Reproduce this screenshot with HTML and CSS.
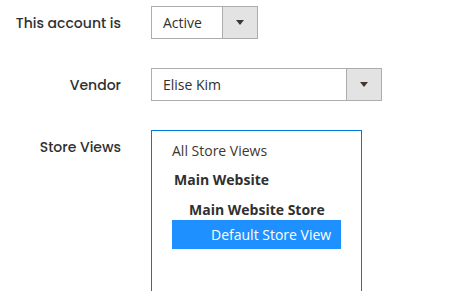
FILE: index.html
```html
<!DOCTYPE html>
<html lang="en">
<head>
    <meta charset="UTF-8">
    <title>Customer Account</title>
    <link rel="stylesheet" href="styles.css">
</head>
<body>
    <div class="admin-form">
        <div class="field">
            <label class="field-label">This account is</label>
            <div class="field-control">
                <div class="select select-small">
                    <span class="select-value">Active</span>
                    <span class="select-arrow"></span>
                </div>
            </div>
        </div>

        <div class="field">
            <label class="field-label">Vendor</label>
            <div class="field-control">
                <div class="select select-wide">
                    <span class="select-value">Elise Kim</span>
                    <span class="select-arrow"></span>
                </div>
            </div>
        </div>

        <div class="field">
            <label class="field-label">Store Views</label>
            <div class="field-control">
                <div class="multiselect">
                    <div class="option">All Store Views</div>
                    <div class="optgroup website">Main Website</div>
                    <div class="optgroup store">Main Website Store</div>
                    <div class="option view selected">Default Store View</div>
                </div>
            </div>
        </div>
    </div>
</body>
</html>
```

FILE: styles.css
```css
* {
    margin: 0;
    padding: 0;
    box-sizing: border-box;
}

body {
    font-family: 'Open Sans', 'Liberation Sans', sans-serif;
    font-size: 14px;
    color: #303030;
    background: #fff;
    overflow: hidden;
}

.admin-form {
    padding-top: 6px;
}

.field {
    display: flex;
    gap: 30px;
    margin-bottom: 29px;
}

.field-label {
    width: 121px;
    padding-top: 7px;
    text-align: right;
    font-family: 'Poppins', Inter, sans-serif;
    font-weight: 500;
    font-size: 14px;
    line-height: 20px;
    color: #303030;
}

.select {
    display: flex;
    height: 33px;
    border: 1px solid #adadad;
    background: #fff;
}

.select-small {
    width: 107px;
}

.select-wide {
    width: 231px;
}

.select-value {
    flex: 1;
    padding-left: 11px;
    line-height: 31px;
}

.select-arrow {
    width: 35px;
    border-left: 1px solid #adadad;
    background: #e3e3e3;
    display: flex;
    align-items: center;
    justify-content: center;
}

.select-arrow::after {
    content: '';
    border-left: 4px solid transparent;
    border-right: 4px solid transparent;
    border-top: 5px solid #41362f;
}

.multiselect {
    width: 211px;
    height: 200px;
    border: 1px solid #007bdb;
    padding: 5px 20px 0 20px;
}

.option,
.optgroup {
    height: 29px;
    line-height: 29px;
    white-space: nowrap;
}

.option {
    color: #41362f;
}

.optgroup {
    font-weight: 700;
}

.website {
    height: 30px;
    padding-left: 2px;
}

.store {
    height: 25px;
    padding-left: 17px;
}

.view {
    padding-left: 39px;
}

.selected {
    background: #1e90ff;
    color: #fff;
}
```
